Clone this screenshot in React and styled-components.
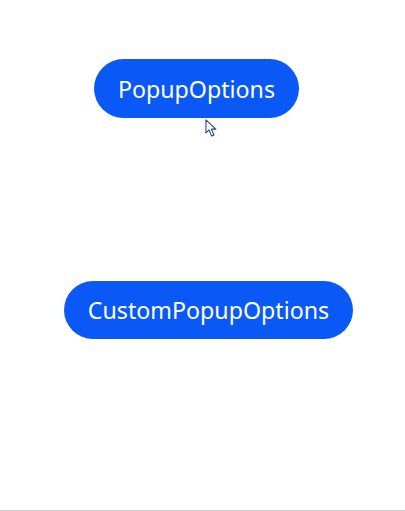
import React from 'react';
import styled, { createGlobalStyle } from 'styled-components';

const GlobalStyle = createGlobalStyle`
  html, body {
    margin: 0;
    padding: 0;
    background: #ffffff;
  }
  body {
    font-family: 'Noto Sans', 'Liberation Sans', sans-serif;
  }
`;

const Page = styled.div`
  position: relative;
  box-sizing: border-box;
  width: 405px;
  height: 511px;
  display: flex;
  flex-direction: column;
  align-items: center;
  padding-top: 59px;
  border-bottom: 1px solid #cccccc;
`;

const PillButton = styled.button`
  position: relative;
  box-sizing: border-box;
  height: ${(p) => p.$height}px;
  padding: 0 24px;
  margin-left: ${(p) => p.$shift * 2}px;
  margin-bottom: ${(p) => p.$gap}px;
  border: none;
  border-radius: 30px;
  background: #0a59f7;
  color: #ffffff;
  font-family: 'Noto Sans', 'Liberation Sans', sans-serif;
  font-size: 23.2px;
  font-weight: 400;
  letter-spacing: 0;
  cursor: pointer;
`;

const Pointer = styled.svg`
  position: absolute;
  left: 111px;
  top: 60px;
  width: 15px;
  height: 19px;
`;

export default function App() {
  return (
    <>
      <GlobalStyle />
      <Page>
        <PillButton $height={59} $shift={-6} $gap={163}>
          PopupOptions
          <Pointer viewBox="0 0 14 18">
            <path
              d="M0.8 0.8 L0.8 13.2 L3.8 10.4 L6.2 16.2 L8.4 15.2 L6 9.6 L10.2 9.6 Z"
              fill="#ffffff"
              stroke="#1f3f9c"
              strokeWidth="1"
              strokeLinejoin="round"
            />
          </Pointer>
        </PillButton>
        <PillButton $height={58} $shift={6} $gap={0}>
          CustomPopupOptions
        </PillButton>
      </Page>
    </>
  );
}
